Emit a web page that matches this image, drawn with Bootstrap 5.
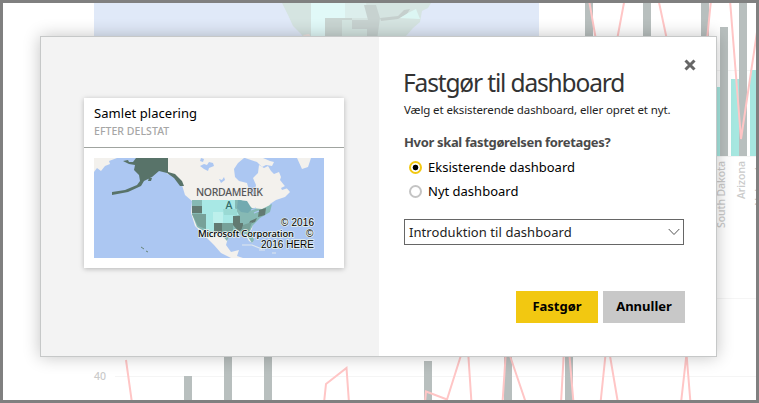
<!DOCTYPE html>
<html lang="da">
<head>
<meta charset="utf-8">
<meta name="viewport" content="width=device-width, initial-scale=1">
<title>Fastgør til dashboard</title>
<link href="https://cdn.jsdelivr.net/npm/bootstrap@5.3.0/dist/css/bootstrap.min.css" rel="stylesheet">
<style>
html,body{height:100%}
body{font-family:"Noto Sans","Open Sans",sans-serif;color:#000;line-height:1}
.frame{width:759px;height:403px;border:3px solid #808080}
.backdrop{left:-3px;top:-3px;width:759px;height:403px}
.pin-dialog{width:677px;height:321px;margin:33px 0 0 37px;border:1px solid #c6c8c8;box-shadow:0 0 16px rgba(0,0,0,.24)}
.preview{width:338px;background:#f3f3f3;padding:61px 0 0 43px}
.tile{width:260px;height:170px;box-shadow:0 1px 5px rgba(0,0,0,.25)}
.tile-head{height:50px;padding:8px 10px 0;border-bottom:1px solid #a0a4a0}
.tile-title{font-size:13px;line-height:14px;letter-spacing:.05px}
.tile-sub{font-size:10.5px;line-height:12px;font-weight:500;color:#a6a6a6;margin-top:5px;letter-spacing:.05px}
.tile-map{width:230px;height:100px;margin:10px 0 0 10px}
.form-side{padding:0 0 0 25px}
.close-x{width:12px;height:12px;margin:22px 20px 0 0}
.dlg-title{font-size:24.5px;line-height:30px;color:#333;font-weight:400;letter-spacing:-1.15px;margin:-3px 0 0 -1px}
.dlg-sub{font-size:11.5px;line-height:16px;color:#222;letter-spacing:-.11px;margin-top:4px}
.question{font-size:13px;line-height:18px;font-weight:700;color:#4a4a4a;letter-spacing:-.34px;margin-top:15px}
.choice{font-size:13px;line-height:18px;height:24px;padding-left:5px;gap:6px}
.choice .form-check-input{width:13px;height:13px;border:2px solid #c4c4c4;box-shadow:none}
.choice .form-check-input:checked{border-color:#f2c811;background:radial-gradient(circle,#000 0 2.5px,#fff 3.2px)}
.picker{width:280px;height:26px;border:1px solid #666;font-size:13px;padding:0 3px 0 4px;margin-top:16px;color:#222;letter-spacing:.07px}
.actions{gap:5px;padding:0 31px 33px 0}
.action{width:82px;height:32px;border:0;border-radius:0;font-size:13px;font-weight:700;padding:0;color:#000}
.action-pin{background:#f2c811}
.action-cancel{background:#c8c8c8}
</style>
<script src="https://cdn.jsdelivr.net/npm/bootstrap@5.3.0/dist/js/bootstrap.bundle.min.js"></script>
</head>
<body class="bg-white overflow-hidden">
<div class="frame position-relative overflow-hidden d-flex align-items-start">
<svg class="backdrop position-absolute" viewBox="0 0 759 403" aria-hidden="true">
 <rect x="94" y="3" width="445" height="40" fill="#e0e9f8"/>
 <path d="M282 3H431L428 8 422 11 420 22 413 28 406 36 400 40H306L301 34 293 26 288 15Z" fill="#d5e4e1"/>
 <path d="M311 3H345V18H325V40H311Z" fill="#e1f9f8"/><path d="M345 3H366L369 18H345Z" fill="#dceeec"/>
 <path d="M325 18H352V29H342V40H325Z" fill="#c9d5d2"/><path d="M342 20H352V29H367V40H342Z" fill="#d3e4e0"/>
 <path d="M352 20H368L364 5H376L380 18 377 40H367V29H352Z" fill="#c7d2d0"/>
 <path d="M380 18 398 16 404 10 410 9 407 14 398 19 381 21Z" fill="#c5cfcd"/><path d="M400 18 408 13 416 9 420 19Z" fill="#dcf6f3"/>
 <path d="M303 35 309 34 312 38H305Z" fill="#efe3e0"/>
 <g stroke="#f5f5f5"><path d="M115 376.5H756M717 70.5H756M717 298.5H756M717 156.5H756"/></g>
 <g fill="#a6e7e0"><path d="M711 87h9v69h-9zM731 79h8v77h-8zM750 70h8v86h-8z"/></g>
 <path fill="#b8bfbe" d="M585 3h8v40h-8zM643 3h8v40h-8zM701 3h8v40h-8zM720 27h8v129h-8zM739 3h8v153h-8zM184 376h8v27h-8zM224 350h8v53h-8zM264 350h8v53h-8zM424 361h8v42h-8zM504 350h8v53h-8zM565 350h8v53h-8z"/>
 <g fill="none" stroke="#ffc6c6" stroke-width="2"><path d="M589 0L596 40M624.5 0L617 40M658.500 0L667 40M711 0L707 40M730 0L741 139 757 32M126 360L132 403M324 403L326 384 346.500 368 349 403M425 403L426 391.500 447 399.500 462 352M468 350L471.500 403M502.500 403L506 350M508 350L526 403M561 403L564 350M569 350L573.500 403M600.500 403L606 350M609 350L618 403M681 403L686.500 354 690.500 403"/></g>
 <g fill="#cacaca" font-size="10.500" font-weight="500"><text x="94" y="380">40</text><text transform="translate(725 228) rotate(-90)" textLength="67">South Dakota</text><text transform="translate(745 199) rotate(-90)" textLength="38">Arizona</text><text transform="translate(763 206) rotate(-90)">Nebraska</text></g>
 <path d="M0 1.500H759M757.500 0V403M0 401.500H759" stroke="#808080" stroke-width="3"/>
</svg>
<div class="pin-dialog position-relative bg-white d-flex flex-shrink-0" role="dialog" aria-labelledby="dialogTitle">
 <section class="preview flex-shrink-0">
  <div class="tile bg-white">
   <div class="tile-head"><div class="tile-title">Samlet placering</div><div class="tile-sub">EFTER DELSTAT</div></div>
   <svg class="tile-map d-block" viewBox="0 0 230 100">
    <rect width="230" height="100" fill="#acc7f2"/>
    <g fill="#f3f1ed">
     <path d="M0 0H23L15 3 16 6 11 8 7 13 3 10 0 14ZM73 0H150L144 5 140 11 141 19 145 23 153 25 155 32 160 37 162 27 159 20 164 15 165 7 170 10 174 8 177 13 180 16 185 14 187 19 186 22 190 27 196 34 191 39 182 42 176 46 174 53 166 58 159 64 158 71 154 76 159 85 155 83 151 76 145 75 134 80 132 87 137 94 145 92 143 98 149 100H137L127 95 120 87 113 80 101 68 97 55 98 43 91 37 88 27 78 17 73 16Z"/>
     <path d="M151 0H169L176 3 180 4 178 8 172 7 168 9 163 4ZM203 0H217L214 9 208 11ZM184 33 192 30 193 36 187 38Z"/>
    </g>
    <path d="M106 8 110 6 113 7 115 4 119 5 120 8 115 10 114 13 110 11ZM107 0 110 1 109 4 106 3ZM125 21 128 22 130 19 131 22 127 25ZM141 33 143 33 142 38ZM187 30 193 27 194 30 188 32Z" fill="#acc7f2"/>
    <path d="M29 3 34 2 35 4 39 4 42 0H74V14L81 16 88 23 90 28 86 28 80 20 73 15 65 13 58 19 50 23 47 28 34 34 18 37 18 34 31 32 43 27 46 23 45 17 40 12 41 7 35 6ZM55 20 58 20 57 23 54 23Z" fill="#587369"/>
    <path d="M98 42H147L158 50 168 51 178 46 176 54 166 60 159 67 156 73 160 82 158 85 152 76 137 75 133 83 126 75 113 75 103 69 98 56Z" fill="#86b9b4"/>
    <path d="M108 42H141V50L145 57 139 58V65H121V73H112V56H108Z" fill="#a8e8e5"/>
    <path d="M119 54H129V65H119Z" fill="#bdf0ec"/><path d="M129 51H143V57H130Z" fill="#9adad4"/>
    <path d="M98 48H108V55H98ZM120 65H128V74H120ZM139 58H146V65H149V70L145 74 139 67ZM156 63 163 60 161 64 155 66ZM165 52 172 50 171 57 164 59Z" fill="#627a72"/>
    <path d="M98 56H112V71L104 68ZM128 65H139V73H128ZM149 67 158 64 155 73H147Z" fill="#77a199"/>
    <path d="M144 42 153 43 158 51 154 55 147 54 143 50Z" fill="#73aab0"/>
    <path d="M157 52 162 50M160 55 165 53" stroke="#acc7f2" stroke-width="1.300"/>
    <path d="M47 89 50 91M52 93 54 94" stroke="#668477"/>
    <path d="M148 87 158 87 168 91M165 92H171M178 95H182" stroke="#dfe8ee" stroke-width="1.200" fill="none"/>
    <g font-size="10.500" font-weight="500" fill="#575757" stroke="#eeeeee" stroke-width="1" paint-order="stroke"><text x="102" y="38" textLength="67">NORDAMERIK</text><text x="131.500" y="50.500" fill="#326a68" stroke="none">A</text></g>
    <g fill="#000" stroke="#e7f1ef" stroke-width="1.500" paint-order="stroke" font-size="10" font-family="Liberation Sans, sans-serif"><text x="187" y="67.500" textLength="33">© 2016</text><text x="104" y="79" textLength="96" font-family="Noto Sans, sans-serif" font-size="9.500" font-weight="500">Microsoft Corporation</text><text x="212" y="79">©</text><text x="167" y="90" textLength="53">2016 HERE</text></g>
   </svg>
  </div>
 </section>
 <section class="form-side flex-grow-1 d-flex flex-column">
  <svg class="close-x align-self-end" viewBox="0 0 12 12" role="img" aria-label="Luk"><path d="M1.500 1.500 10.500 10.500M10.500 1.500 1.500 10.500" stroke="#666" stroke-width="3"/></svg>
  <h1 class="dlg-title text-nowrap" id="dialogTitle">Fastgør til dashboard</h1>
  <p class="dlg-sub mb-0 text-nowrap">Vælg et eksisterende dashboard, eller opret et nyt.</p>
  <div class="question text-nowrap">Hvor skal fastgørelsen foretages?</div>
  <div class="mt-1">
   <label class="choice d-flex align-items-center"><input class="form-check-input m-0" type="radio" name="target" checked><span>Eksisterende dashboard</span></label>
   <label class="choice d-flex align-items-center"><input class="form-check-input m-0" type="radio" name="target"><span>Nyt dashboard</span></label>
  </div>
  <div class="picker d-flex align-items-center justify-content-between"><span>Introduktion til dashboard</span><svg width="12" height="8" viewBox="0 0 12 8"><path d="M.7 1 6 6.500 11.300 1" fill="none" stroke="#555"/></svg></div>
  <div class="d-flex justify-content-end mt-auto actions"><button class="btn action action-pin">Fastgør</button><button class="btn action action-cancel">Annuller</button></div>
 </section>
</div>
</div>
</body>
</html>
